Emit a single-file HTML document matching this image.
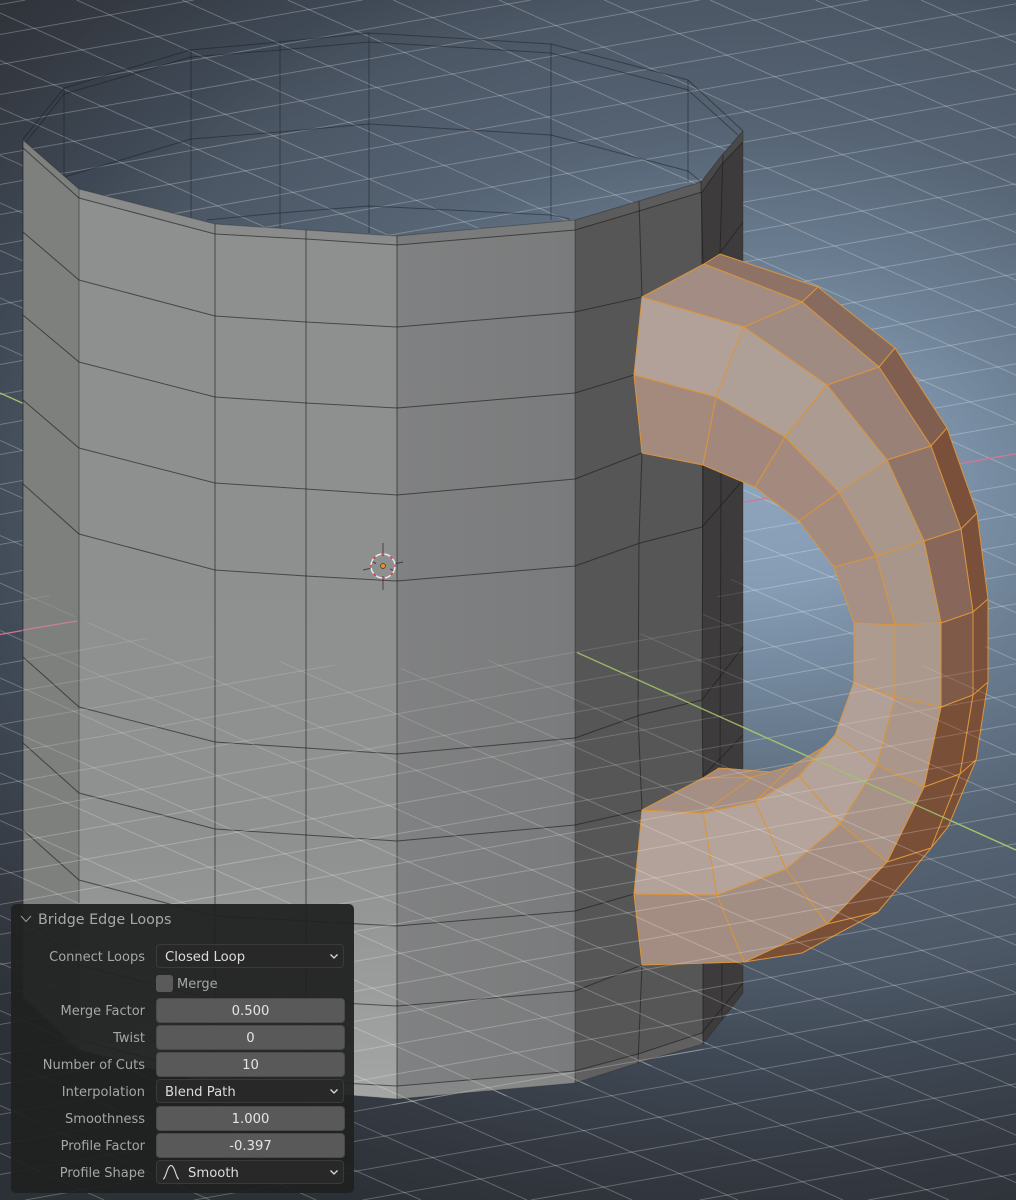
<!DOCTYPE html>
<html lang="en">
<head>
<meta charset="utf-8">
<title>Bridge Edge Loops</title>
<style>
html,body{margin:0;padding:0;background:#333;width:1016px;height:1200px;overflow:hidden}
#v{position:relative;width:1016px;height:1200px;overflow:hidden;background:radial-gradient(ellipse 1064px 760px at 760px 490px,#8da4bc 0,#859cb4 13%,#6b7e92 30%,#556373 48%,#4c5765 65%,#3f4956 74%,#353a42 88%,#2c3037 100%)}
svg.s{position:absolute;left:0;top:0;width:1016px;height:1200px;overflow:hidden;filter:blur(.3px)}
#p{position:absolute;left:11px;top:904px;width:343px;height:289px;border-radius:5px;background:rgba(32,33,33,.94);font-family:"DejaVu Sans","Liberation Sans",sans-serif;color:#a6a6a6;font-size:13px;filter:blur(.3px)}
#p .t{position:absolute;left:27px;top:6px;font-size:14.3px;line-height:20px;color:#a8a8a8;white-space:nowrap}
#p .l{position:absolute;right:209px;line-height:28px;height:24px;white-space:nowrap}
#p .f{position:absolute;left:145px;width:187px;height:23px;line-height:25px;border-radius:4px;box-sizing:content-box;text-align:center;color:#e4e4e4;background:#595959;border:.5px solid #4a4a4a;font-size:13.2px}
#p .d{background:#282828;border:1px solid #3a3a3a;text-align:left;height:22px;line-height:26px;width:186px;color:#dcdcdc}
#p .d span{position:absolute;left:8px;height:22px;white-space:nowrap}
#p svg{position:absolute}
#p .c{position:absolute;left:145px;top:71px;width:17px;height:17px;border-radius:3px;background:#5a5a5a}
#p .m{position:absolute;left:166px;top:68px;line-height:26px;height:24px}
</style>
</head>
<body>
<div id="v">
<svg class="s" width="1016" height="1200" viewBox="0 0 1016 1200" xmlns="http://www.w3.org/2000/svg">
<defs>
<path id="gb" d="M921 0l95 42.700M815.600 0l200.400 90.200M710 0l306 137.700M604.400 0l411.600 185.200M499 0l517 232.700M393.300 0l622.700 280.200M287.800 0l728.200 327.700M182.200 0l833.800 375.200M76.700 0l939.300 422.700M0 13l1016 457.200M0 60.500l1016 457.200M0 108l1016 457.200M0 155.500l1016 457.200M0 203l1016 457.200M0 250.500l1016 457.200M0 298l1016 457.200M0 345.500l1016 457.200M0 440.500l1016 457.200M0 488l1016 457.200M0 535.500l1016 457.200M0 583l1016 457.200M0 630.500l1016 457.200M0 678l1016 457.200M0 725.500l1016 457.200M0 773l949 427M0 820.500l843 379.500M0 868l738 332M0 915.500l632 284.500M0 963l527 237M0 1010.500l421 189.500M0 1058l316 142M0 1105.500l210 94.500M0 1153l104 47"/>
<path id="ga" d="M0 4.500L25.300 0M0 34.500L193.900 0M0 64.500L362.500 0M0 94.500L531 0M0 124.500L699.600 0M0 154.500L868.200 0M0 184.500l1016 -180.800M0 214.500l1016 -180.800M0 244.500l1016 -180.800M0 274.500l1016 -180.800M0 304.500l1016 -180.800M0 334.500l1016 -180.800M0 364.500l1016 -180.800M0 394.500l1016 -180.800M0 424.500l1016 -180.800M0 454.500l1016 -180.800M0 484.500l1016 -180.800M0 514.500l1016 -180.800M0 544.500l1016 -180.800M0 574.500l1016 -180.800M0 604.500l1016 -180.800M0 664.500l1016 -180.800M0 694.500l1016 -180.800M0 724.500l1016 -180.800M0 754.500l1016 -180.800M0 784.500l1016 -180.800M0 814.500l1016 -180.800M0 844.500l1016 -180.800M0 874.500l1016 -180.800M0 904.500l1016 -180.800M0 934.500l1016 -180.800M0 964.500l1016 -180.800M0 994.500l1016 -180.800M0 1024.500l1016 -180.800M0 1054.500l1016 -180.800M0 1084.500l1016 -180.800M0 1114.500l1016 -180.800M0 1144.500l1016 -180.800M0 1174.500l1016 -180.800M25.300 1200L1016 1023.700M194 1200L1016 1053.700M362.500 1200L1016 1083.700M531 1200L1016 1113.700M699.600 1200L1016 1143.700M868 1200L1016 1173.700"/>
<linearGradient id="ff" gradientUnits="userSpaceOnUse" x1="0" y1="190" x2="0" y2="1100">
<stop offset="0" stop-color="#8e908f"/><stop offset=".72" stop-color="#8f9190"/><stop offset="1" stop-color="#a4a6a5"/>
</linearGradient>
<linearGradient id="fr" gradientUnits="userSpaceOnUse" x1="397" y1="0" x2="575" y2="0">
<stop offset="0" stop-color="#808182"/><stop offset="1" stop-color="#7a7b7c"/>
</linearGradient>
<linearGradient id="ov" gradientUnits="userSpaceOnUse" x1="0" y1="600" x2="0" y2="860">
<stop offset="0" stop-color="#fff" stop-opacity=".1"/><stop offset="1" stop-color="#fff" stop-opacity=".24"/>
</linearGradient>
<clipPath id="cl">
<path d="M23 572L79 620L215 657L306 663L397 669L575 652L640 634L703 614L743 565V1000L703 1050L575 1090L397 1105L215 1090L79 1055L23 1000Z"/>
<path d="M854 660L875 658L925 666L988 645L990 700L976 760L948 827L931 848L878 912L802 953L744 962L642 965L634 894L642 810L703 778L720 768L770 772L792 766L825 746L835 735L854 682Z"/>
</clipPath>
</defs>

<!-- floor grid -->
<g fill="none" stroke="#fff" stroke-opacity=".25" stroke-width="1">
<use href="#gb"/><use href="#ga"/>
</g>
<path d="M0 393L1016 850" stroke="#a3c268" stroke-width="1.3" fill="none"/>
<path d="M0 634.500L1016 453.700" stroke="#d2788e" stroke-width="1.3" fill="none"/>

<!-- back wires -->
<g fill="none" stroke="#161b20" stroke-opacity=".48" stroke-width="1">
<path d="M23 139L64 88L190 50L279 42L369 33L551 44L688 80L743 131"/>
<path d="M26 142L64 94L191 57L280 50L369 42L551 53L688 90L738 135"/>
<path d="M64 177L191 139L279 132L369 124L551 135L688 171L701 182"/>
<path d="M207 220L279 213L369 206L551 215L570 219"/>
<path d="M64 88V177M191 50V220M280 42V228M369 33V233M551 44V220M688 80V182"/>
</g>

<!-- mug walls -->
<polygon points="23,140 79,189 79,1050 23,997" fill="#7e807e"/>
<polygon points="79,189 215,224 306,230 397,236 397,1099 215,1085 79,1050" fill="url(#ff)"/>
<polygon points="397,236 575,220 575,1083 397,1099" fill="url(#fr)"/>
<polygon points="575,220 639,201 701,182 703,1044 638,1063 575,1083" fill="#565656"/>
<polygon points="701,182 722,155 743,131 743,993 722,1020 703,1044" fill="#3d3b3b"/>
<!-- rim / base bands -->
<polygon points="79,189 215,224 306,230 397,236 397,245 306,239 215,234 79,198" fill="#8a8c8b"/>
<polygon points="397,236 575,220 575,230 397,245" fill="#7a7b7b"/>
<polygon points="575,220 639,201 701,182 702,192 639,211 575,230" fill="#5c5c5c"/>
<polygon points="701,182 722,155 743,131 743,142 722,164 702,192" fill="#4a4949"/>
<polygon points="397,1086 575,1071 575,1083 397,1099" fill="#868888"/>
<polygon points="575,1071 638,1054 702,1033 703,1044 638,1063 575,1083" fill="#606060"/>

<!-- mug edges -->
<g fill="none" stroke="#1e1e1e" stroke-opacity=".64" stroke-width="1">
<path d="M23 140V997"/>
<path d="M23 148L79 198L215 234L306 239L397 245L575 230L639 211L702 192L722 164L743 142"/>
<path stroke-opacity=".45" d="M79 189V1050"/>
<path d="M215 224V1085M306 230V1090M397 236V1099"/>
<path stroke-opacity=".42" d="M575 220V1083"/>
<path d="M639 201L642 297M642 453L639 540L638 715L642 810M642 965L638 1063"/>
<path d="M701 182L703 264M703 465L702 700L703 778M703 813V1044"/>
<path d="M723 155L720 253M721 470L720 768M722 961V1020"/>
<path d="M23 232L79 280L215 316L306 322L397 327L575 312L642 297"/>
<path d="M702 277L720 253L743 222"/>
<path d="M23 315L79 362L215 397L306 403L397 408L575 393L634 375"/>
<path d="M23 400L79 448L215 483L306 489L397 495L575 479L642 453"/>
<path d="M23 484L79 534L215 570L306 576L397 581L575 566L640 543L702 527L743 480"/>
<path d="M23 657L79 707L215 742L306 748L397 754L575 738L640 715L702 700L743 647"/>
<path d="M23 743L79 793L215 829L306 835L397 841L575 825L642 810"/>
<path d="M703 776L743 735"/>
<path d="M23 830L79 880L215 916L306 921L397 926L575 911L634 894"/>
<path d="M23 915L79 965L215 1000L306 1001L397 1006L575 991L642 965"/>
<path d="M79 1040L215 1076L306 1081L397 1086L575 1071L638 1054L702 1033L722 1008L743 983"/>
<path stroke-opacity=".3" d="M23 997L79 1050L215 1085L397 1099L575 1083L638 1063L703 1044L722 1020L743 993V131"/>
<path stroke-opacity=".35" d="M23 140L79 189L215 224L306 230L397 236L575 220L639 201L701 182L722 155L743 131"/>
</g>

<!-- handle -->
<g stroke="#d9953c" stroke-width="1" stroke-linejoin="round">
<!-- outer strip -->
<polygon fill="#8d7265" points="720,254 704,264 802,302 818,287"/>
<polygon fill="#876b5e" points="818,287 802,302 879,367 895,348"/>
<polygon fill="#815f50" points="895,348 879,367 931,446 947,428"/>
<polygon fill="#7a503b" points="947,428 931,446 961,529 977,513"/>
<polygon fill="#7a503b" points="977,513 961,529 973,612 988,599"/>
<polygon fill="#7a503b" points="988,599 973,612 973,695 988,682"/>
<polygon fill="#7a4f38" points="988,682 973,695 960,774 976,760"/>
<polygon fill="#7a4f38" points="976,760 960,774 931,848 948,827"/>
<!-- a-b -->
<polygon fill="#a28c83" points="704,264 642,297 744,327 802,302"/>
<polygon fill="#a08b82" points="802,302 744,327 827,385 879,367"/>
<polygon fill="#9a8177" points="879,367 827,385 887,460 931,446"/>
<polygon fill="#8f7569" points="931,446 887,460 924,541 961,529"/>
<polygon fill="#88675a" points="961,529 924,541 941,623 973,612"/>
<polygon fill="#7f5a49" points="973,612 941,623 941,707 973,695"/>
<polygon fill="#7a4f38" points="973,695 941,707 924,787 960,774"/>
<polygon fill="#7a4f38" points="960,774 924,787 887,862 931,848"/>
<polygon fill="#7a4f38" points="931,848 887,862 827,924 878,912"/>
<polygon fill="#7a4f38" points="878,912 827,924 744,962 802,953"/>
<!-- b-c -->
<polygon fill="#b2a198" points="642,297 634,375 716,397 744,327"/>
<polygon fill="#afa097" points="744,327 716,397 785,437 827,385"/>
<polygon fill="#ab9b90" points="827,385 785,437 839,492 887,460"/>
<polygon fill="#a9978c" points="887,460 839,492 876,556 924,541"/>
<polygon fill="#a8968a" points="924,541 876,556 895,625 941,623"/>
<polygon fill="#ab998e" points="941,623 895,625 895,697 941,707"/>
<polygon fill="#aa968b" points="941,707 895,697 877,765 924,787"/>
<polygon fill="#a89388" points="924,787 877,765 840,824 887,862"/>
<polygon fill="#a58f84" points="887,862 840,824 786,869 827,924"/>
<polygon fill="#a38e83" points="827,924 786,869 717,895 744,962"/>
<polygon fill="#a38d82" points="744,962 717,895 634,894 642,965"/>
<!-- c-d -->
<polygon fill="#a4897d" points="634,375 642,453 703,465 716,397"/>
<polygon fill="#a2887c" points="716,397 703,465 755,487 785,437"/>
<polygon fill="#a48a7e" points="785,437 755,487 799,521 839,492"/>
<polygon fill="#a48b7f" points="839,492 799,521 834,567 876,556"/>
<polygon fill="#a68f84" points="876,556 834,567 854,623 895,625"/>
<polygon fill="#ae9b90" points="895,625 854,623 854,682 895,697"/>
<polygon fill="#b0a097" points="895,697 854,682 835,735 877,765"/>
<polygon fill="#b3a39a" points="877,765 835,735 799,776 840,824"/>
<polygon fill="#b4a49b" points="840,824 799,776 755,802 786,869"/>
<polygon fill="#b4a49b" points="786,869 755,802 703,813 717,895"/>
<polygon fill="#b3a29a" points="717,895 703,813 642,810 634,894"/>
<!-- inner top surface -->
<polygon fill="#a58f84" points="642,810 703,778 753,777 703,813"/>
<polygon fill="#a58a7e" points="703,778 719,768 770,772 753,777"/>
<polygon fill="#a58f84" points="703,813 753,777 770,772 792,766 755,802"/>
<polygon fill="#a58f84" points="755,802 792,766 825,746 799,776"/>
<polygon fill="#ab988c" points="799,776 825,746 835,735"/>
</g>

<!-- floor grid seen through lower geometry -->
<g clip-path="url(#cl)" fill="none" stroke="url(#ov)" stroke-width="1">
<use href="#gb"/><use href="#ga"/>
</g>
<path d="M577 652.500L1016 850" stroke="#a3c268" stroke-opacity=".9" stroke-width="1.3" fill="none"/>
<path d="M23 630L77 621" stroke="#c9808f" stroke-width="1.3" fill="none"/>

<!-- 3D cursor -->
<g fill="none">
<path d="M383 543V556M383 576V590M363 570L372 568M394 564L403 562M371 561L376 563.500M390 569L395 571" stroke="#2a2a2a" stroke-opacity=".75" stroke-width="1"/>
<circle cx="383" cy="566" r="12" stroke="#e8e8e8" stroke-width="1.5"/>
<circle cx="383" cy="566" r="12" stroke="#d8394a" stroke-width="1.5" stroke-dasharray="3 6.42" stroke-dashoffset="2"/>
<circle cx="383" cy="566" r="2.400" fill="#f0920f" stroke="#333" stroke-width=".7"/>
</g>
</svg>

<div id="p">
<svg style="left:8px;top:9px" width="14" height="12" viewBox="0 0 14 12"><path d="M2 3l5 5.500L12 3" fill="none" stroke="#9a9a9a" stroke-width="1"/></svg>
<div class="t">Bridge Edge Loops</div>

<div class="l" style="top:40px">Connect Loops</div>
<div class="f d" style="top:40px"><span>Closed Loop</span><svg style="right:4px;top:8px" width="10" height="7" viewBox="0 0 10 7"><path d="M1.500 1.500L5 5L8.500 1.500" fill="none" stroke="#dcdcdc" stroke-width="1.3"/></svg></div>

<div class="c"></div><div class="m">Merge</div>

<div class="l" style="top:94px">Merge Factor</div>
<div class="f" style="top:94px">0.500</div>
<div class="l" style="top:121px">Twist</div>
<div class="f" style="top:121px">0</div>
<div class="l" style="top:148px">Number of Cuts</div>
<div class="f" style="top:148px">10</div>

<div class="l" style="top:175px">Interpolation</div>
<div class="f d" style="top:175px"><span>Blend Path</span><svg style="right:4px;top:8px" width="10" height="7" viewBox="0 0 10 7"><path d="M1.500 1.500L5 5L8.500 1.500" fill="none" stroke="#dcdcdc" stroke-width="1.3"/></svg></div>

<div class="l" style="top:202px">Smoothness</div>
<div class="f" style="top:202px">1.000</div>
<div class="l" style="top:229px">Profile Factor</div>
<div class="f" style="top:229px">-0.397</div>

<div class="l" style="top:256px">Profile Shape</div>
<div class="f d" style="top:256px"><svg style="left:5px;top:3px" width="20" height="17" viewBox="0 0 20 17"><path d="M1 15C4 15 5 1.500 9 1.500C13 1.500 14 15 17 15" fill="none" stroke="#dcdcdc" stroke-width="1.1"/></svg><span style="left:31px">Smooth</span><svg style="right:4px;top:8px" width="10" height="7" viewBox="0 0 10 7"><path d="M1.500 1.500L5 5L8.500 1.500" fill="none" stroke="#dcdcdc" stroke-width="1.3"/></svg></div>
</div>
</div>
</body>
</html>
